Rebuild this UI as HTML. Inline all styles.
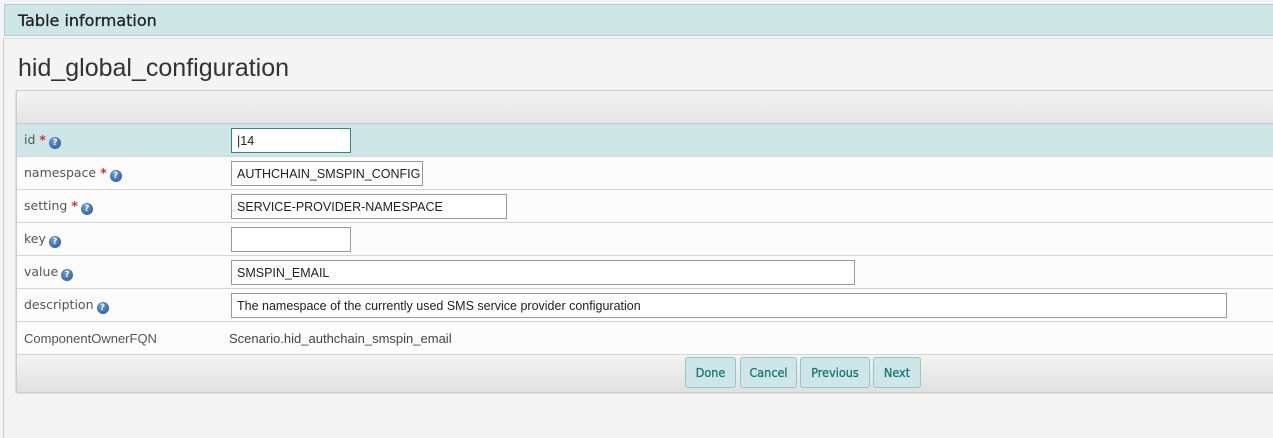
<!DOCTYPE html>
<html><head><meta charset="utf-8"><style>
*{box-sizing:border-box;margin:0;padding:0}
body{width:1273px;height:428px;background:#f4f4f4;font-family:"Liberation Sans","DejaVu Sans",sans-serif;overflow:hidden;position:relative;color:#444}
.abs{position:absolute}
.hdr{left:4px;top:4px;width:1275px;height:32px;background:#cfe6e7;border:1px solid #a9d0d2;font-size:16px;color:#222;padding:6px 0 0 13px;font-family:"DejaVu Sans","Liberation Sans",sans-serif;-webkit-text-stroke:0.3px #222}
.panel{left:3px;top:38px;width:1280px;height:400px;background:#f4f4f4;border-left:1px solid #ccc;border-top:1px solid #ddd}
h1{position:absolute;left:18px;top:54px;font-size:25px;font-weight:normal;color:#333;font-family:"Liberation Sans",sans-serif}
.tbl{left:16px;top:90px;width:1270px;height:301px;border:1px solid #ccc;background:#fcfcfc;box-shadow:0 2px 2px #bbb}
.th{left:0;top:0;width:100%;height:33px;background:linear-gradient(#f3f3f3,#e4e4e4);border-bottom:1px solid #c8c8c8}
.row{left:0;width:100%;height:33px;border-bottom:1px solid #d4d4d4;background:#fcfcfc}
.lbl{position:absolute;left:7px;top:8px;color:#555;font-family:"DejaVu Sans","Liberation Sans",sans-serif;font-size:12.5px}
.lb2{position:absolute;left:7px;top:9px;color:#555;font-family:"Liberation Sans",sans-serif;font-size:13px}
.st{color:#c33;font-weight:bold}
.q{display:inline-block;width:12px;height:12px;border-radius:50%;background:radial-gradient(circle at 40% 35%,#6a9ee0,#1f4f9a);color:#fff;font-size:9px;font-weight:bold;text-align:center;line-height:12px;vertical-align:-1px;margin-left:3px}
.in{position:absolute;left:214px;top:4px;height:25px;border:1px solid #999;background:#fff;padding:5px 0 0 5px;color:#222;font-family:"Liberation Sans",sans-serif;font-size:12.5px;white-space:nowrap;overflow:hidden}
.ft{left:0;top:264px;width:100%;height:37px;background:linear-gradient(#f3f3f3,#e0e0e0)}
.btn{position:absolute;top:2px;height:31px;border:1px solid #8ccbcc;border-radius:3px;background:#cfe6e8;color:#17797a;font-size:12.5px;text-align:center;line-height:29px;font-family:"DejaVu Sans Condensed","Liberation Sans",sans-serif;-webkit-text-stroke:0.3px #17797a}
</style></head><body>
<div class="abs hdr">Table information</div>
<div class="abs panel"></div>
<h1>hid_global_configuration</h1>
<div class="abs tbl">
 <div class="abs th"></div>
 <div class="abs row" style="top:33px;background:#cfe6e7"><div class="lbl">id <span class="st">*</span><span class="q">?</span></div><div class="in" style="width:120px;border-color:#2a8a8a">|14</div></div>
 <div class="abs row" style="top:66px"><div class="lbl">namespace <span class="st">*</span><span class="q">?</span></div><div class="in" style="width:192px">AUTHCHAIN_SMSPIN_CONFIG</div></div>
 <div class="abs row" style="top:99px"><div class="lbl">setting <span class="st">*</span><span class="q">?</span></div><div class="in" style="width:276px">SERVICE-PROVIDER-NAMESPACE</div></div>
 <div class="abs row" style="top:132px"><div class="lbl">key<span class="q">?</span></div><div class="in" style="width:120px"></div></div>
 <div class="abs row" style="top:165px"><div class="lbl">value<span class="q">?</span></div><div class="in" style="width:624px">SMSPIN_EMAIL</div></div>
 <div class="abs row" style="top:198px"><div class="lbl">description<span class="q">?</span></div><div class="in" style="width:996px">The namespace of the currently used SMS service provider configuration</div></div>
 <div class="abs row" style="top:231px"><div class="lb2">ComponentOwnerFQN</div><div class="lb2" style="left:212px;color:#444">Scenario.hid_authchain_smspin_email</div></div>
 <div class="abs ft">
  <div class="btn" style="left:668px;width:51px">Done</div>
  <div class="btn" style="left:723px;width:57px">Cancel</div>
  <div class="btn" style="left:783px;width:70px">Previous</div>
  <div class="btn" style="left:856px;width:48px">Next</div>
 </div>
</div>
</body></html>
